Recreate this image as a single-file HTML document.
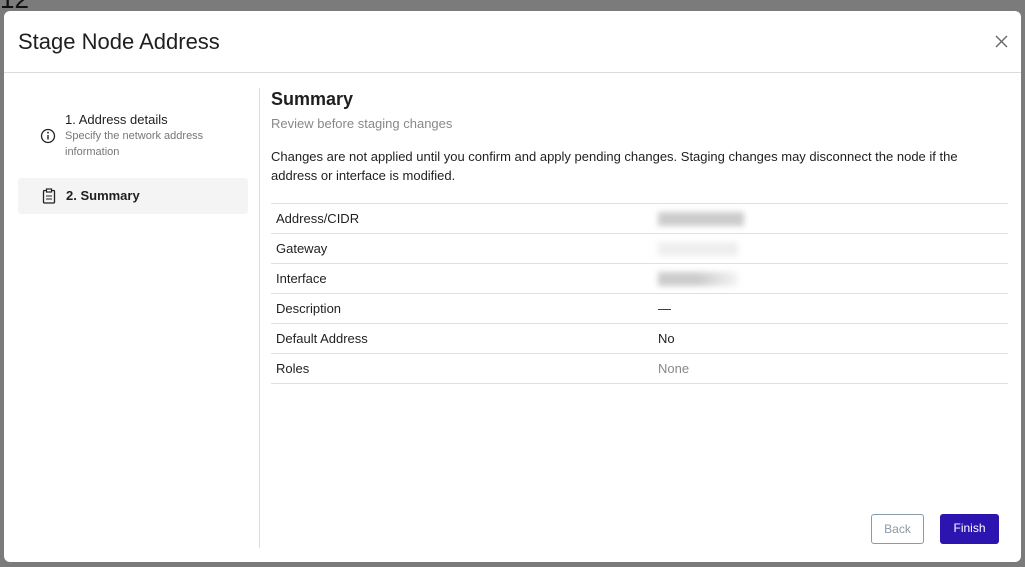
<!DOCTYPE html>
<html><head><style>
*{box-sizing:border-box;margin:0;padding:0}
body{width:1025px;height:567px;background:#7b7b7b;font-family:"Liberation Sans",sans-serif;position:relative;overflow:hidden;color:#1f1f1f}
.bg2{position:absolute;left:0;top:-16px;font-size:26px;color:#111}
.modal{position:absolute;left:4px;top:11px;width:1017px;height:551px;background:#fff;border-radius:6px}
.title{position:absolute;left:14px;top:18px;font-size:22px;color:#1f1f1f}
.hr{position:absolute;left:0;top:61px;width:100%;height:1px;background:#dcdcdc}
.vr{position:absolute;left:255px;top:77px;width:1px;height:460px;background:#dcdcdc}
.s1{position:absolute;left:61px;top:101px;font-size:13px}
.s1 small{display:block;font-size:11px;color:#777;line-height:16px;margin-top:1px;width:160px}
.sel{position:absolute;left:14px;top:167px;width:230px;height:36px;background:#f4f4f4;border-radius:3px}
.sel span{position:absolute;left:48px;top:10px;font-size:13px;font-weight:bold}
.h{position:absolute;left:267px;top:78px;font-size:18px;font-weight:bold}
.sub{position:absolute;left:267px;top:105px;font-size:13px;color:#888}
.p{position:absolute;left:267px;top:136px;width:720px;font-size:13px;line-height:19px}
table{position:absolute;left:267px;top:192px;width:737px;border-collapse:collapse;font-size:13px}
td{height:30px;border-top:1px solid #e0e0e0;padding-left:5px}
tr:last-child td{border-bottom:1px solid #e0e0e0}
td:first-child{width:382px}
.blur{display:inline-block;height:14px;background:#ddd;filter:blur(3px);vertical-align:middle}
.btn{position:absolute;top:503px;height:30px;border-radius:3px;font-size:12px;text-align:center;line-height:29px}
</style></head><body>
<div class="bg2">12</div>
<div class="modal">
<div class="title">Stage Node Address</div>
<svg style="position:absolute;left:991px;top:24px" width="13" height="13"><path d="M1 1L12 12M12 1L1 12" stroke="#666" stroke-width="1.4"/></svg>
<div class="hr"></div>
<div class="vr"></div>
<svg style="position:absolute;left:36px;top:117px" width="16" height="16"><circle cx="8" cy="8" r="6.5" fill="none" stroke="#222" stroke-width="1.3"/><line x1="8" y1="7" x2="8" y2="11.5" stroke="#222" stroke-width="1.4"/><circle cx="8" cy="4.7" r=".9" fill="#222"/></svg>
<div class="s1">1. Address details<small>Specify the network address information</small></div>
<div class="sel"><svg style="position:absolute;left:24px;top:10px" width="14" height="16"><rect x="1.5" y="2.5" width="11" height="12.5" rx="1" fill="none" stroke="#222" stroke-width="1.3"/><rect x="4.5" y="1" width="5" height="3" fill="#fff" stroke="#222" stroke-width="1.2"/><line x1="4" y1="8" x2="10" y2="8" stroke="#222"/><line x1="4" y1="11" x2="10" y2="11" stroke="#222"/></svg><span>2. Summary</span></div>
<div class="h">Summary</div>
<div class="sub">Review before staging changes</div>
<div class="p">Changes are not applied until you confirm and apply pending changes. Staging changes may disconnect the node if the address or interface is modified.</div>
<table>
<tr><td>Address/CIDR</td><td><span class="blur" style="width:86px;background:#ccc"></span></td></tr>
<tr><td>Gateway</td><td><span class="blur" style="width:80px;background:#eee"></span></td></tr>
<tr><td>Interface</td><td><span class="blur" style="width:80px;background:linear-gradient(90deg,#ccc 50%,#f4f4f4)"></span></td></tr>
<tr><td>Description</td><td>—</td></tr>
<tr><td>Default Address</td><td>No</td></tr>
<tr><td>Roles</td><td style="color:#888">None</td></tr>
</table>
<div class="btn" style="left:867px;width:53px;border:1px solid #8a9aa6;color:#8a9aa6">Back</div>
<div class="btn" style="left:936px;width:59px;background:#2c14b0;color:#fff">Finish</div>
</div>
</body></html>
